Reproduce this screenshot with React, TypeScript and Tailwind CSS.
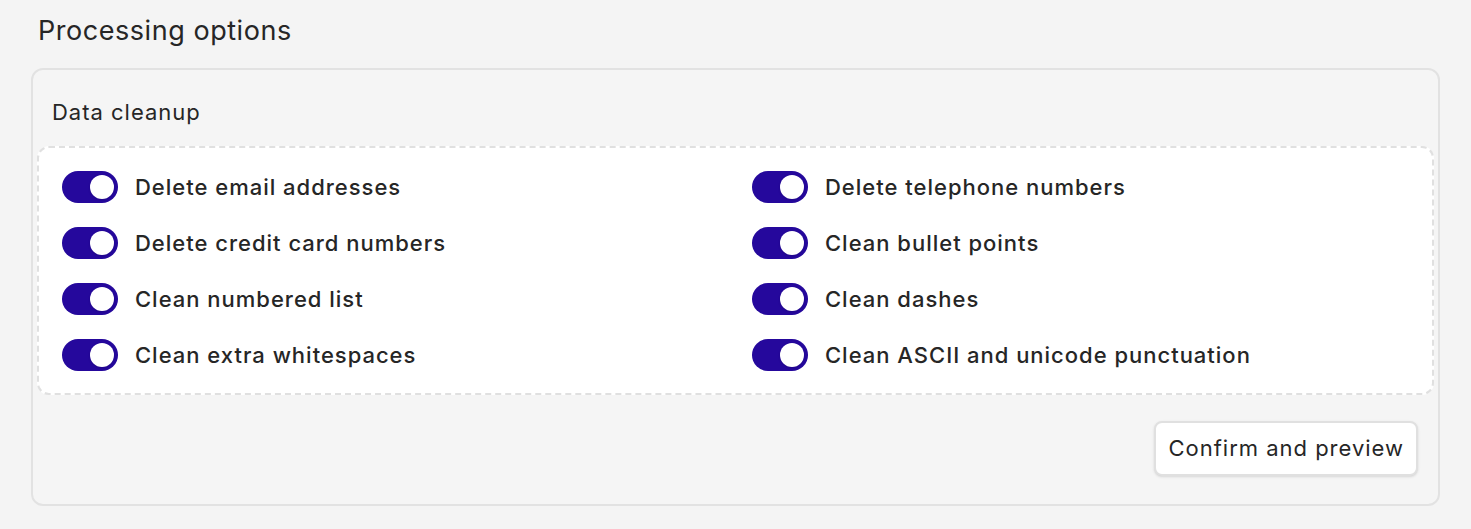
const left = [
  "Delete email addresses",
  "Delete credit card numbers",
  "Clean numbered list",
  "Clean extra whitespaces",
];

const right = [
  "Delete telephone numbers",
  "Clean bullet points",
  "Clean dashes",
  "Clean ASCII and unicode punctuation",
];

function Toggle() {
  return (
    <div className="relative w-[56px] h-[32px] shrink-0 rounded-full bg-[#25089c]">
      <div className="absolute right-[4px] top-[4px] w-[24px] h-[24px] rounded-full bg-white shadow-sm" />
    </div>
  );
}

function Option({ label }: { label: string }) {
  return (
    <div className="flex items-center gap-[17px] h-[32px]">
      <Toggle />
      <span className="text-[22px] font-medium tracking-[0.045em] text-[#262626] leading-none">{label}</span>
    </div>
  );
}

export default function App() {
  return (
    <div className="min-h-screen bg-[#f4f4f4] px-[31px] pt-[14px] pb-[22px] font-['Inter',sans-serif]">
      <h1 className="pl-[7px] text-[27px] tracking-[0.02em] leading-[34px] text-[#262626]">Processing options</h1>

      <div className="mt-[20px] w-[1409px] rounded-[12px] border-2 border-[#e2e2e2] bg-[#f5f5f5] px-[4px] pt-[28px] pb-[28px]">
        <div className="pl-[15px] text-[22px] tracking-[0.045em] leading-[28px] text-[#262626]">Data cleanup</div>

        <div className="mt-[20px] rounded-[12px] border-2 border-dashed border-[#e0e0e0] bg-white pl-[23px] pr-[23px] pt-[23px] pb-[22px]">
          <div className="grid grid-cols-[690px_1fr] gap-y-[24px]">
            {left.map((l, i) => (
              <div key={l} className="contents">
                <Option label={l} />
                <Option label={right[i]} />
              </div>
            ))}
          </div>
        </div>

        <div className="mt-[26px] flex justify-end pr-[16px]">
          <button className="h-[55px] rounded-[8px] border-2 border-[#e0e0e0] bg-white px-[12px] text-[22px] tracking-[0.045em] text-[#262626] shadow-sm">
            Confirm and preview
          </button>
        </div>
      </div>
    </div>
  );
}
